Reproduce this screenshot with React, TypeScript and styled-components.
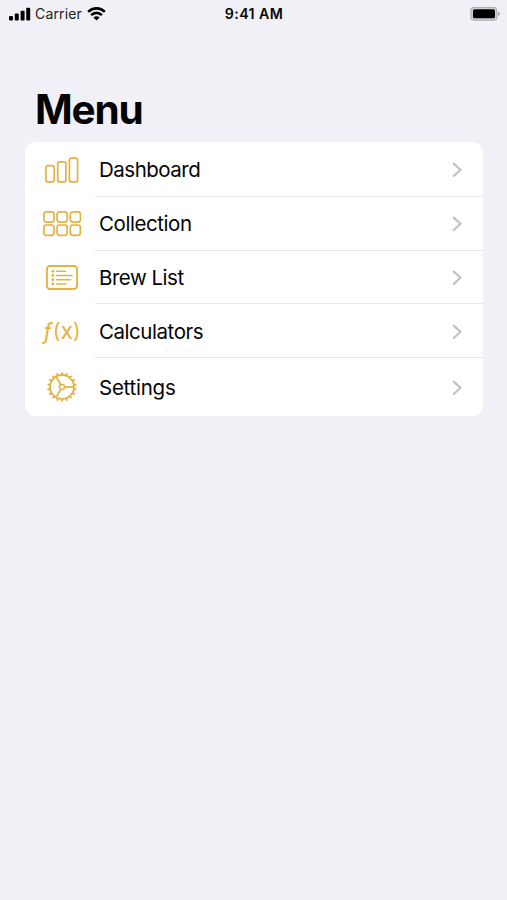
import React from "react";
import styled, { createGlobalStyle } from "styled-components";

const GOLD = "#e3b341";

const GlobalStyle = createGlobalStyle`
  * { box-sizing: border-box; }
  body { margin: 0; background: #f1f0f6; }
`;

const Screen = styled.main`
  display: flex;
  flex-direction: column;
  width: 507px;
  height: 900px;
  overflow: hidden;
  background: #f1f0f6;
  color: #050505;
  font-family: Inter, "Liberation Sans", sans-serif;
`;

const StatusBar = styled.header`
  display: grid;
  grid-template-columns: 1fr auto 1fr;
  align-items: center;
  height: 27px;
  padding: 0 7px 0 9px;
`;

const Network = styled.div`
  display: flex;
  align-items: center;
  gap: 4px;
`;

const Carrier = styled.span`
  margin-right: 1px;
  font-size: 14px;
  line-height: 18px;
  letter-spacing: 0.15px;
  color: #222;
`;

const Clock = styled.time`
  margin-right: 1px;
  font-size: 14.2px;
  line-height: 18px;
  font-weight: 600;
  letter-spacing: 0.4px;
`;

const Power = styled.div`
  display: flex;
  justify-content: flex-end;
`;

const Title = styled.h1`
  margin: 58px 0 7px 35px;
  height: 50px;
  font-size: 40.5px;
  line-height: 50px;
  font-weight: 700;
  letter-spacing: -1.15px;
`;

const Card = styled.nav`
  display: flex;
  flex-direction: column;
  width: 458px;
  margin-left: 25px;
  border-radius: 11px;
  background: #fff;
`;

const Row = styled.a<{ $height: number }>`
  display: flex;
  height: ${(p) => p.$height}px;
  color: inherit;
  text-decoration: none;
`;

const IconCell = styled.span`
  display: flex;
  align-items: center;
  justify-content: center;
  width: 70px;
  padding-left: 4px;
  color: ${GOLD};
`;

const RowBody = styled.span<{ $last: boolean; $drop: number }>`
  display: flex;
  flex: 1;
  align-items: center;
  justify-content: space-between;
  padding: ${(p) => p.$drop}px 20px 0 4px;
  border-bottom: ${(p) => (p.$last ? "0" : "1px solid #e6e6ea")};
`;

const Label = styled.span<{ $spacing: number }>`
  font-size: 20.5px;
  line-height: 26px;
  letter-spacing: ${(p) => p.$spacing}px;
`;

const Formula = styled.span`
  display: flex;
  align-items: center;
  font-size: 21px;
  line-height: 26px;
`;

const FormulaName = styled.i`
  margin-right: 1px;
  font-size: 22px;
`;

const FormulaVariable = styled.span`
  font-size: 23px;
`;

const Signal = () => (
  <svg width="22" height="14" viewBox="0 0 22 14" fill="#000">
    <rect x="0" y="9" width="4" height="4.5" rx="1" />
    <rect x="5.8" y="6.5" width="4" height="7" rx="1" />
    <rect x="11.6" y="3.8" width="4" height="9.7" rx="1" />
    <rect x="17.2" y="0.8" width="4" height="12.7" rx="1" />
  </svg>
);

const Wifi = () => (
  <svg width="19" height="14" viewBox="0 0 19 14" fill="none" stroke="#000" strokeWidth="2.6">
    <path d="M1.2 4.8C5.8.2 13.2.2 17.8 4.8" />
    <path d="M4.1 8.1C7.2 5.1 11.8 5.1 14.9 8.1" />
    <path d="M6.4 10.4C8.1 8.8 10.9 8.8 12.6 10.4L9.5 13.5Z" fill="#000" stroke="none" />
  </svg>
);

const Battery = () => (
  <svg width="30" height="14" viewBox="0 0 30 14">
    <rect x="0.9" y="0.5" width="26" height="12.6" rx="3.4" fill="#d2d2d6" stroke="#aeaeb2" strokeWidth="1.1" />
    <rect x="3" y="2.3" width="22" height="9" rx="1.6" fill="#000" />
    <path d="M28 4.5Q30 5.2 30 6.8T28 9.1Z" fill="#aaaaae" />
  </svg>
);

const Bars = () => (
  <svg width="34" height="28" viewBox="0 0 34 28" fill="none" stroke="currentColor" strokeWidth="1.7">
    <rect x="1" y="9.7" width="8.2" height="16.2" rx="2" />
    <rect x="12.7" y="5.9" width="8.2" height="20" rx="2" />
    <rect x="24.4" y="2.1" width="8.2" height="23.8" rx="2" />
  </svg>
);

const Tiles = () => (
  <svg width="40" height="28" viewBox="0 0 40 28" fill="none" stroke="currentColor" strokeWidth="1.7">
    {[1.8, 15].map((y) =>
      [1.9, 15.1, 28.3].map((x) => (
        <rect key={`${x}-${y}`} x={x} y={y} width="10.1" height="10.3" rx="2.5" />
      ))
    )}
  </svg>
);

const ListCard = () => (
  <svg width="34" height="28" viewBox="0 0 34 28" fill="none" stroke="currentColor" strokeWidth="1.5">
    <rect x="1.9" y="2" width="30.2" height="23" rx="3.2" strokeWidth="1.9" />
    {[
      [7.3, 20.5],
      [11.5, 27],
      [15.7, 25.5],
      [19.9, 20.5],
    ].map(([y, end]) => (
      <React.Fragment key={y}>
        <circle cx="7.8" cy={y} r="1.4" fill="currentColor" stroke="none" />
        <path d={`M11.5 ${y}H${end}`} strokeLinecap="round" />
      </React.Fragment>
    ))}
  </svg>
);

const Gear = () => (
  <svg width="32" height="32" viewBox="-16 -16 32 32" fill="none" stroke="currentColor" strokeWidth="1.8">
    <circle r="12" />
    <circle r="2.6" strokeWidth="1.5" />
    {[0, 120, 240].map((a) => (
      <path key={a} d="M2.6 0H12" transform={`rotate(${a})`} />
    ))}
    {Array.from({ length: 18 }, (_, i) => (
      <path key={i} d="M12.5 0H14.6" strokeWidth="2.1" transform={`rotate(${i * 20 + 10})`} />
    ))}
  </svg>
);

const FunctionIcon = () => (
  <Formula>
    <FormulaName>ƒ</FormulaName>(<FormulaVariable>x</FormulaVariable>)
  </Formula>
);

const Chevron = () => (
  <svg width="12" height="16" viewBox="0 0 12 16" fill="none" stroke="#c0c0c2" strokeWidth="2.1" strokeLinecap="round" strokeLinejoin="round">
    <path d="M2.7 1.6L9.6 7.8L2.7 14" />
  </svg>
);

const items = [
  { label: "Dashboard", height: 55, drop: 2, spacing: -0.5, Icon: Bars },
  { label: "Collection", height: 54, drop: 0, spacing: -0.43, Icon: Tiles },
  { label: "Brew List", height: 53, drop: 2, spacing: -0.48, Icon: ListCard },
  { label: "Calculators", height: 54, drop: 2, spacing: -0.45, Icon: FunctionIcon },
  { label: "Settings", height: 58, drop: 1, spacing: -0.25, Icon: Gear },
];

export default function App() {
  return (
    <Screen>
      <GlobalStyle />
      <StatusBar>
        <Network>
          <Signal />
          <Carrier>Carrier</Carrier>
          <Wifi />
        </Network>
        <Clock>9:41 AM</Clock>
        <Power>
          <Battery />
        </Power>
      </StatusBar>
      <Title>Menu</Title>
      <Card>
        {items.map(({ label, height, drop, spacing, Icon }, i) => (
          <Row key={label} $height={height}>
            <IconCell>
              <Icon />
            </IconCell>
            <RowBody $last={i === items.length - 1} $drop={drop}>
              <Label $spacing={spacing}>{label}</Label>
              <Chevron />
            </RowBody>
          </Row>
        ))}
      </Card>
    </Screen>
  );
}
